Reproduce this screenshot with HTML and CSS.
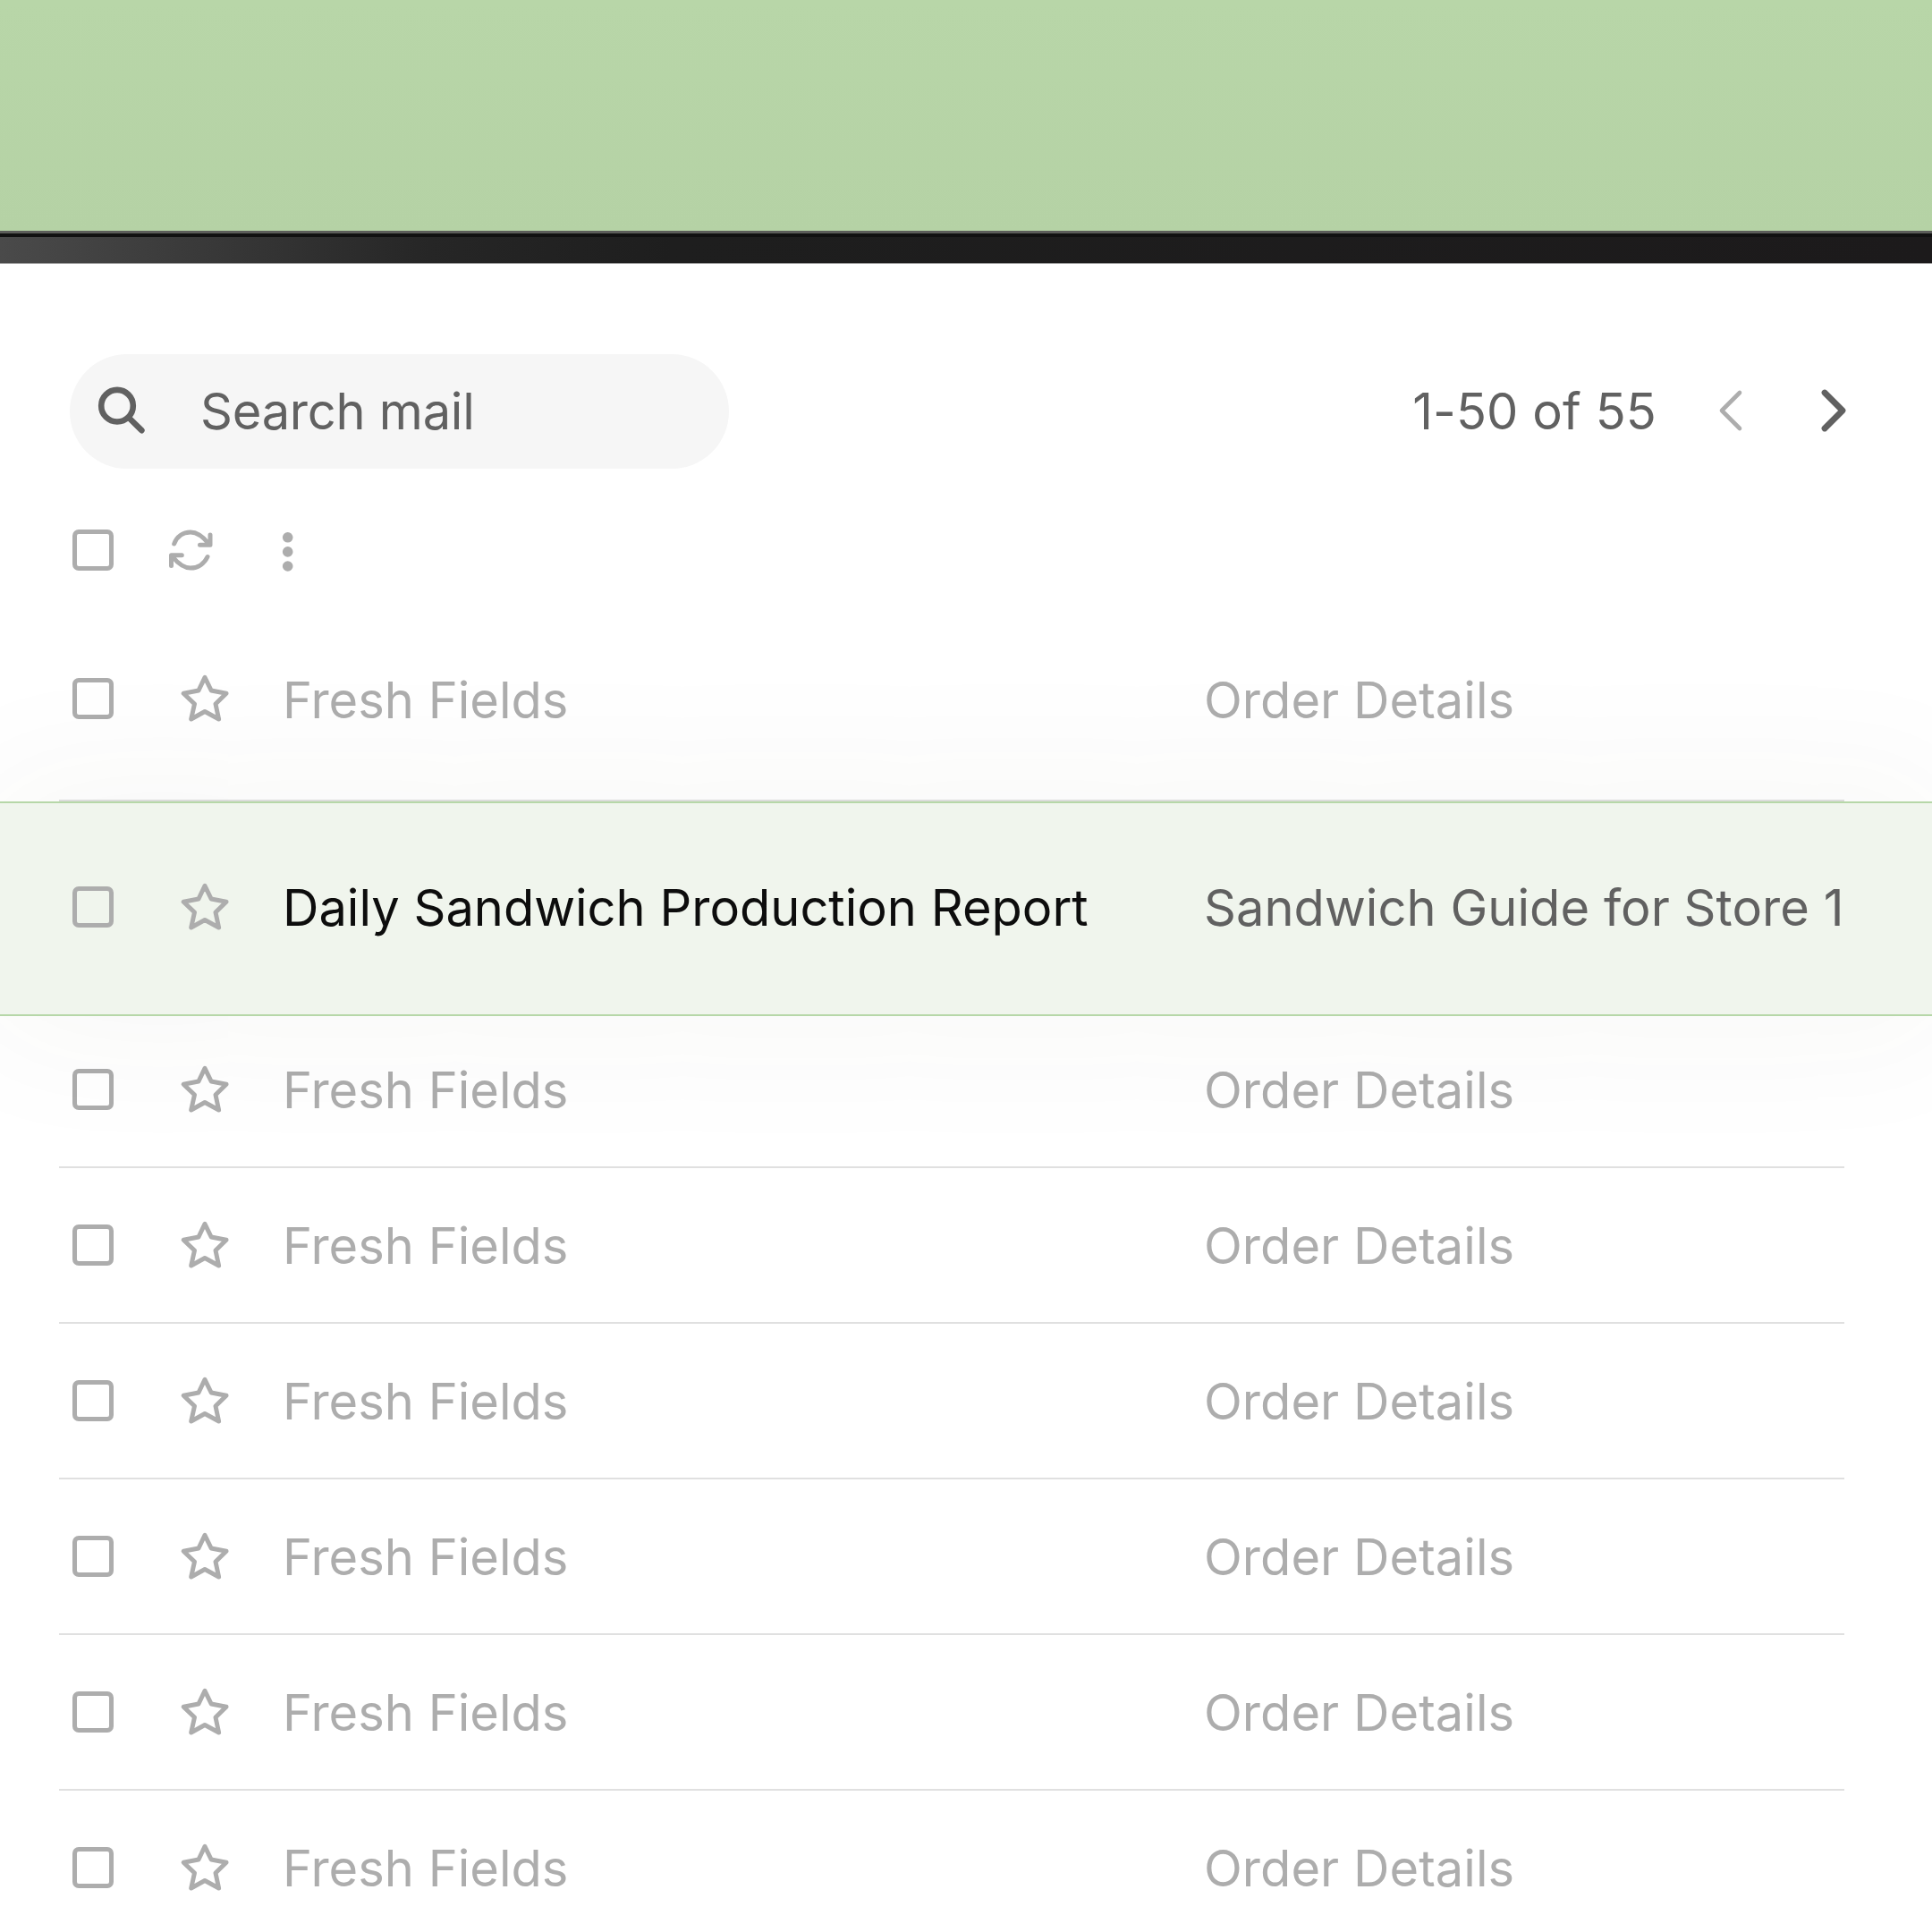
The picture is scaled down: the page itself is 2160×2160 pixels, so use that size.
FILE: index.html
```
<!DOCTYPE html>
<html lang="en">
<head>
<meta charset="utf-8">
<title>Mail</title>
<link rel="stylesheet" href="styles.css">
</head>
<body>
<svg class="sprite" aria-hidden="true">
  <symbol id="star" viewBox="0 0 56 56"><path d="M28 4.3 L35.2 19 L52 22.2 L40 34 L43.6 51 L28 42.5 L12.7 51 L16.5 34 L4.2 22.2 L21 19 Z" fill="none" stroke="currentColor" stroke-width="5" stroke-linejoin="round"/></symbol>
</svg>
<div class="backdrop"></div>
<div class="bezel"></div>
<main class="mail">
  <header class="topbar">
    <div class="search">
      <svg class="search-icon" viewBox="0 0 48 48"><circle cx="23" cy="21.7" r="17.8"/><path d="M36 35 L50.4 49.2"/></svg>
      <span>Search mail</span>
    </div>
    <div class="pager">
      <span class="count">1-50 of 55</span>
      <svg class="chevron prev" viewBox="0 0 32 52"><path d="M26 6 L6 26 L26 46"/></svg>
      <svg class="chevron next" viewBox="0 0 32 52"><path d="M5 6 L25 26 L5 46"/></svg>
    </div>
  </header>
  <div class="toolbar">
    <span class="checkbox"></span>
    <svg class="refresh" viewBox="0 0 56 48"><path d="M9.7 17 C12.5 9 19.5 4 28 4 C36 4 42 9 48.5 17 M50 7 V18.3 H38.5 M47 31.5 C43.5 39 36.5 44 28 44 C20 44 14 39 7.5 31 M6.5 41.5 V29.7 H18.3"/></svg>
    <svg class="dots" viewBox="0 0 16 48"><circle cx="7.7" cy="9.8" r="5.8"/><circle cx="7.7" cy="25.9" r="5.8"/><circle cx="7.7" cy="42" r="5.8"/></svg>
  </div>
  <section class="list">
    <div class="row first"><span class="checkbox"></span><svg class="star"><use href="#star"/></svg><span class="sender">Fresh Fields</span><span class="subject">Order Details</span></div>
    <div class="row active"><span class="checkbox"></span><svg class="star"><use href="#star"/></svg><span class="sender">Daily Sandwich Production Report</span><span class="subject">Sandwich Guide for Store 1</span></div>
    <div class="row after"><span class="checkbox"></span><svg class="star"><use href="#star"/></svg><span class="sender">Fresh Fields</span><span class="subject">Order Details</span></div>
    <div class="row"><span class="checkbox"></span><svg class="star"><use href="#star"/></svg><span class="sender">Fresh Fields</span><span class="subject">Order Details</span></div>
    <div class="row"><span class="checkbox"></span><svg class="star"><use href="#star"/></svg><span class="sender">Fresh Fields</span><span class="subject">Order Details</span></div>
    <div class="row"><span class="checkbox"></span><svg class="star"><use href="#star"/></svg><span class="sender">Fresh Fields</span><span class="subject">Order Details</span></div>
    <div class="row"><span class="checkbox"></span><svg class="star"><use href="#star"/></svg><span class="sender">Fresh Fields</span><span class="subject">Order Details</span></div>
    <div class="row"><span class="checkbox"></span><svg class="star"><use href="#star"/></svg><span class="sender">Fresh Fields</span><span class="subject">Order Details</span></div>
  </section>
</main>
</body>
</html>
```

FILE: styles.css
```
* { box-sizing: border-box; }
html, body { margin: 0; height: 2160px; overflow: hidden; }
body {
  display: flex;
  flex-direction: column;
  background: #fff;
  color: #adadad;
  font: 400 56px/68px Inter, "Liberation Sans", sans-serif;
  white-space: nowrap;
}
.sprite { display: none; }
.backdrop { flex: none; height: 258px; background: linear-gradient(#b8d6a8, #b5d2a5); }
.bezel {
  flex: none;
  height: 36px;
  border-top: 3px solid #5c5d5a;
  background:
    linear-gradient(#111 4px, transparent 4px),
    linear-gradient(90deg, #4a4a4a 0, #262626 480px, #1e1e1e 750px, #1c1a1b 100%);
}
.mail { flex: none; height: 1866px; display: flex; flex-direction: column; border-top: 1px solid #999; }
.topbar {
  flex: none;
  display: flex;
  justify-content: space-between;
  height: 128px;
  margin: 101px 93px 0 78px;
}
.search {
  display: flex;
  align-items: center;
  gap: 68px;
  width: 737px;
  padding-left: 30px;
  border-radius: 64px;
  background: #f6f6f6;
  color: #616161;
  letter-spacing: -0.25px;
}
.search-icon { width: 48px; height: 48px; margin-top: -8px; overflow: visible; fill: none; stroke: #616161; stroke-width: 6.6; stroke-linecap: round; }
.pager { display: flex; align-items: center; color: #616161; }
.count { letter-spacing: 0.1px; }
.chevron { width: 32px; height: 52px; margin-top: -3px; fill: none; stroke-linecap: round; stroke-linejoin: round; }
.prev { margin-left: 67px; stroke: #adadad; stroke-width: 4.6; }
.next { margin-left: 84px; stroke: #616161; stroke-width: 6.8; }
.toolbar { flex: none; display: flex; align-items: center; height: 48px; margin: 67px 0 0 81px; }
.checkbox { flex: none; width: 46px; height: 46px; border: 5px solid #adadad; border-radius: 7px; }
.refresh { width: 56px; height: 48px; margin-left: 58px; fill: none; stroke: #adadad; stroke-width: 5; stroke-linecap: round; stroke-linejoin: round; }
.dots { width: 16px; height: 48px; margin-left: 73px; fill: #adadad; }
.list { flex: none; margin-top: 29px; }
.row {
  display: grid;
  grid-template-columns: 120px 115px 1030px 1fr;
  align-items: center;
  height: 174px;
  margin: 0 98px 0 66px;
  padding: 0 0 1px 15px;
  border-bottom: 2px solid #e0e0e0;
}
.row .star { width: 56px; height: 56px; }
.sender, .subject { padding-top: 3px; }
.subject { letter-spacing: 0.05px; }
.first { height: 228px; padding-bottom: 0; }
.active {
  position: relative;
  height: 240px;
  margin: 0;
  padding: 0 0 4px 81px;
  border-top: 2px solid #b6d7a8;
  border-bottom-color: #b6d7a8;
  background: #f0f5ed;
  box-shadow: 0 0 170px 20px rgba(70, 70, 40, 0.044), 80px 0 170px 0 rgba(70, 70, 40, 0.005), -80px 0 170px 0 rgba(70, 70, 40, 0.005);
}
.active .sender, .active .subject { padding-top: 1px; }
.active .sender { color: #0d0d0d; }
.active .subject { color: #616161; }
.after { height: 170px; padding-bottom: 5px; }
```
